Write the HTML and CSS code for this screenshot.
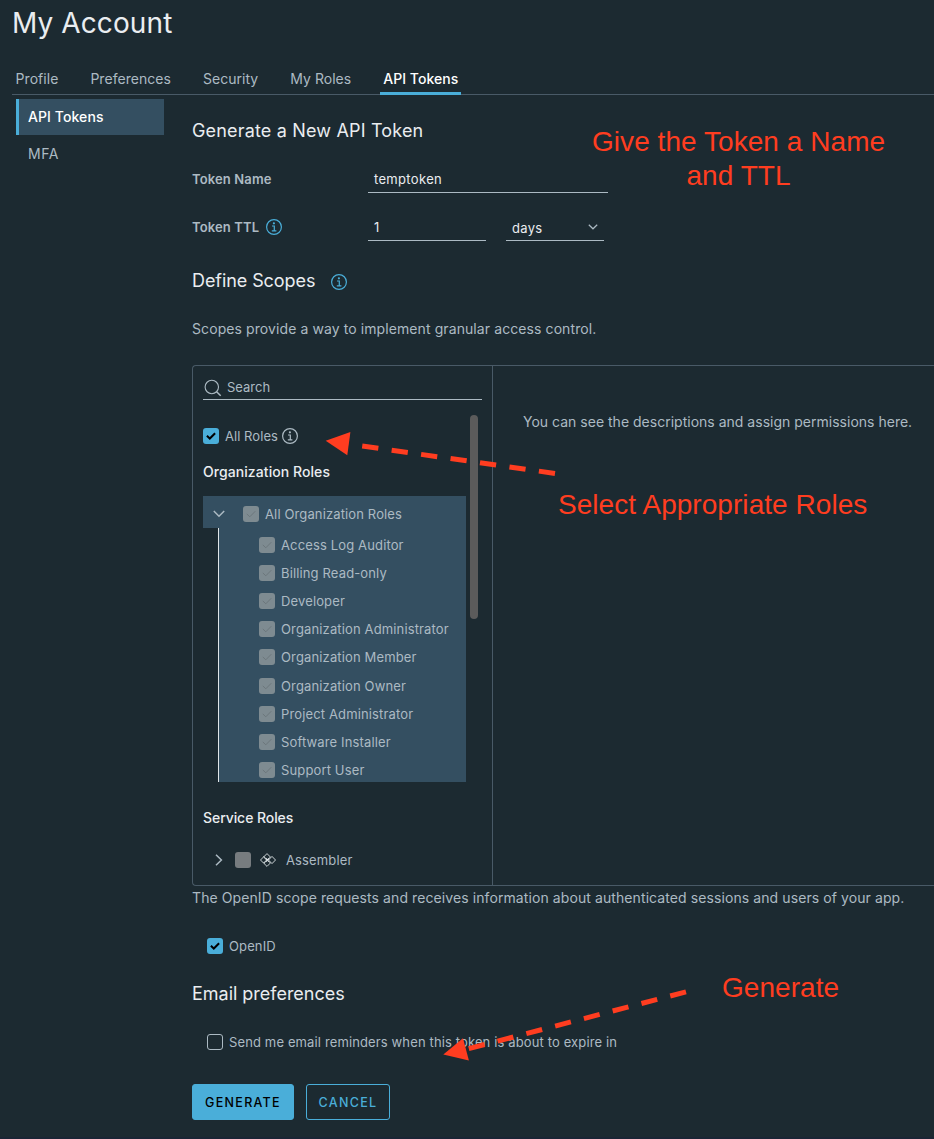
FILE: index.html
```html
<!DOCTYPE html>
<html lang="en">
<head>
<meta charset="utf-8">
<title>My Account</title>
<link rel="stylesheet" href="styles.css">
</head>
<body>
<svg class="defs" width="0" height="0">
  <symbol id="info" viewBox="0 0 16 16"><circle cx="8" cy="8" r="7.4" fill="none" stroke="currentColor" stroke-width="1.2"/><circle cx="7.9" cy="4.3" r="1.1" fill="currentColor"/><path d="M6 7h2.3v4.8M5.8 11.9h4.6" fill="none" stroke="currentColor" stroke-width="1.2"/></symbol>
  <symbol id="check" viewBox="0 0 16 16"><path d="M3.9 7.8l2.9 2.7 5.3-5.2" fill="none" stroke="currentColor" stroke-width="2"/></symbol>
  <symbol id="check-thin" viewBox="0 0 16 16"><path d="M3.8 7.9l3 2.9 5.5-5.6" fill="none" stroke="currentColor" stroke-width="1"/></symbol>
</svg>
<div class="page">
  <h1 class="title">My Account</h1>
  <nav class="tabs">
    <a class="tab">Profile</a><a class="tab">Preferences</a><a class="tab">Security</a><a class="tab">My Roles</a><a class="tab active">API Tokens</a>
  </nav>
  <div class="body">
    <aside class="sidebar">
      <a class="side-item current">API Tokens</a>
      <a class="side-item">MFA</a>
    </aside>
    <main class="content">
      <h2 class="heading first">Generate a New API Token</h2>
      <div class="field">
        <label class="label">Token Name</label>
        <div class="input wide">temptoken</div>
      </div>
      <div class="field second">
        <label class="label">Token TTL <svg class="info blue"><use href="#info"/></svg></label>
        <div class="input ttl">1</div>
        <div class="input unit"><span>days</span><svg class="caret" viewBox="0 0 10 6"><path d="M.8.8L5 4.8 9.2.8" fill="none" stroke="currentColor" stroke-width="1.2"/></svg></div>
      </div>
      <h2 class="heading scopes">Define Scopes <svg class="info blue"><use href="#info"/></svg></h2>
      <p class="text">Scopes provide a way to implement granular access control.</p>
      <section class="box">
        <div class="panel">
          <div class="search"><svg class="lens" viewBox="0 0 18 18"><circle cx="7.8" cy="8" r="6.7" fill="none" stroke="currentColor" stroke-width="1.1"/><path d="M12.6 12.8l4.1 4" stroke="currentColor" stroke-width="1.5"/></svg>Search</div>
          <div class="scroll">
            <div class="list">
              <div class="all-roles"><span class="box-check on"><svg><use href="#check"/></svg></span><span>All Roles</span><svg class="info"><use href="#info"/></svg></div>
              <h3 class="group org">Organization Roles</h3>
              <div class="tree">
                <div class="tree-head"><svg class="chev-down" viewBox="0 0 12 8"><path d="M.8 1l5.2 5.2L11.2 1" fill="none" stroke="currentColor" stroke-width="1.5"/></svg><span class="box-check off"><svg><use href="#check-thin"/></svg></span><span>All Organization Roles</span></div>
                <div class="children">
                  <div class="role"><span class="box-check off"><svg><use href="#check-thin"/></svg></span>Access Log Auditor</div>
                  <div class="role"><span class="box-check off"><svg><use href="#check-thin"/></svg></span>Billing Read-only</div>
                  <div class="role"><span class="box-check off"><svg><use href="#check-thin"/></svg></span>Developer</div>
                  <div class="role"><span class="box-check off"><svg><use href="#check-thin"/></svg></span>Organization Administrator</div>
                  <div class="role"><span class="box-check off"><svg><use href="#check-thin"/></svg></span>Organization Member</div>
                  <div class="role"><span class="box-check off"><svg><use href="#check-thin"/></svg></span>Organization Owner</div>
                  <div class="role"><span class="box-check off"><svg><use href="#check-thin"/></svg></span>Project Administrator</div>
                  <div class="role"><span class="box-check off"><svg><use href="#check-thin"/></svg></span>Software Installer</div>
                  <div class="role"><span class="box-check off"><svg><use href="#check-thin"/></svg></span>Support User</div>
                </div>
              </div>
              <h3 class="group service">Service Roles</h3>
              <div class="service-row">
                <svg class="chev-right" viewBox="0 0 8 12"><path d="M1 .8L6.4 6 1 11.2" fill="none" stroke="currentColor" stroke-width="1.5"/></svg>
                <span class="box-check empty"></span>
                <svg class="assembler" viewBox="0 0 16 14"><path d="M7 .6L10.4 4 7 7.4 3.6 4zM7 6.6L10.4 10 7 13.4 3.6 10zM3.9 3.6L7.3 7l-3.4 3.4L.5 7zM12 3.4L15.5 7 12 10.6 8.5 7z" fill="none" stroke="currentColor" stroke-width=".9"/><path d="M6 5.5l3 3M9 5.5l-3 3" stroke="currentColor" stroke-width="1.1"/></svg>
                <span>Assembler</span>
              </div>
            </div>
            <div class="thumb"></div>
          </div>
        </div>
        <p class="hint">You can see the descriptions and assign permissions here.</p>
      </section>
      <p class="text openid-text">The OpenID scope requests and receives information about authenticated sessions and users of your app.</p>
      <div class="option openid"><span class="box-check on"><svg><use href="#check"/></svg></span>OpenID</div>
      <h2 class="heading email">Email preferences</h2>
      <div class="option remind"><span class="box-check outline"></span>Send me email reminders when this token is about to expire in</div>
      <div class="actions"><button class="btn primary">GENERATE</button><button class="btn">CANCEL</button></div>
    </main>
  </div>
  <div class="footer-edge"></div>
  <svg class="arrows" viewBox="0 0 934 1139">
    <path class="head" d="M325.7 440.7L350.4 432 347.3 455.2z"/>
    <path class="dash" d="M362.2 446L555 473.4"/>
    <path class="head" d="M443.3 1054.6L463 1038.2 468.9 1060.4z"/>
    <path class="dash" d="M468.8 1048.6L686 991.9"/>
  </svg>
  <div class="note name-note">Give the Token a Name<br>and TTL</div>
  <div class="note roles-note">Select Appropriate Roles</div>
  <div class="note generate-note">Generate</div>
</div>
</body>
</html>
```
FILE: styles.css
```css
* { box-sizing: border-box; }
body { margin: 0; background: #1c2a31; color: #acbac3; font: 13px/16px Inter, sans-serif; letter-spacing: .13px; }
h1, h2, h3, p { margin: 0; font-weight: 400; }
svg { display: block; flex: none; }
.defs { position: absolute; }
.page { position: relative; width: 934px; height: 1139px; overflow: hidden; }
.title { height: 44px; padding: 1px 0 0 12px; color: #eaedf0; font-size: 28px; line-height: 44px; letter-spacing: .1px; }
.tabs { display: flex; gap: 26px; height: 32px; margin: 19px 0 0 12px; padding-left: .6px; border-bottom: 1px solid #495a67; font-size: 14px; line-height: 32px; letter-spacing: .04px; }
.tab { padding: 0 3px; }
.tab.active { height: 32px; border-bottom: 3px solid #4aaed9; color: #fff; font-weight: 500; }
.body { display: flex; gap: 28px; }
.sidebar { width: 164px; flex: none; padding: 4px 0 0 16px; }
.side-item { display: block; height: 37px; padding-left: 12px; font-size: 14px; line-height: 38px; letter-spacing: .5px; }
.side-item.current { height: 36px; padding-left: 9px; border-left: 3px solid #4aaed9; background: #344f61; color: #fff; font-weight: 500; line-height: 36px; letter-spacing: .09px; }
.content { flex: 1; min-width: 0; }
.heading { color: #eaedf0; font-size: 18px; line-height: 25px; letter-spacing: 0; }
.first { margin-top: 23px; letter-spacing: .17px; }
.field { display: flex; height: 27px; margin-top: 23px; }
.second { margin-top: 21px; }
.label { display: flex; align-items: center; gap: 7px; width: 176px; height: 25px; font-weight: 600; }
.info { width: 16px; height: 16px; }
.blue { color: #4aaed9; }
.input { height: 27px; padding-left: 6px; border-bottom: 1px solid #acbac3; color: #eaedf0; line-height: 26px; letter-spacing: .33px; }
.wide { width: 240px; }
.ttl { width: 118px; margin-right: 20px; }
.unit { display: flex; justify-content: space-between; width: 98px; padding: 1px 6px 0 6px; }
.caret { width: 10px; height: 6px; margin-top: 9px; color: #acbac3; }
.scopes { display: flex; align-items: center; gap: 16px; margin-top: 27px; letter-spacing: -.08px; }
.scopes .info { margin-top: 3px; }
.text { margin-top: 26px; font-size: 14px; line-height: 20px; letter-spacing: .09px; white-space: nowrap; }
.box { display: flex; height: 521px; margin-top: 26px; border: 1px solid #495a67; border-right: 0; border-radius: 4px 0 0 4px; }
.panel { width: 300px; flex: none; padding: 10px 0 0 10px; border-right: 1px solid #495a67; }
.search { display: flex; align-items: center; width: 279px; height: 24px; gap: 5px; padding: 0 0 1px 1px; border-bottom: 1px solid #acbac3; letter-spacing: 0; }
.lens { width: 18px; height: 18px; margin-top: 2px; }
.scroll { display: flex; gap: 4px; }
.list { width: 263px; }
.thumb { width: 8px; height: 204px; margin-top: 15px; border-radius: 4px; background: #5b5b5b; }
.all-roles { display: flex; align-items: center; height: 16px; margin-top: 28px; letter-spacing: .05px; }
.all-roles .info { margin-left: 4px; }
.box-check { flex: none; width: 16px; height: 16px; margin-right: 6px; border-radius: 3px; }
.box-check svg { width: 16px; height: 16px; }
.on { background: #4aaed9; color: #000; }
.off { background: #7e8b91; color: #6c777c; }
.empty { background: #777c7f; }
.outline { border: 1px solid #acbac3; }
.group { height: 20px; color: #eaedf0; font-size: 14px; font-weight: 500; line-height: 20px; letter-spacing: .07px; }
.org { margin-top: 18px; }
.tree { height: 286px; margin-top: 14px; }
.tree-head { display: flex; align-items: center; height: 32px; padding: 3px 0 0 10px; background: #344f61; }
.chev-down { width: 12px; height: 8px; margin-right: 18px; }
.children { height: 254px; margin-left: 15px; padding: 3px 0 0 40px; overflow: hidden; border-left: 1px solid #dfe5e8; background: #344f61; }
.role { display: flex; align-items: center; height: 28.12px; letter-spacing: .14px; }
.service { margin-top: 26px; letter-spacing: -.07px; }
.service-row { display: flex; align-items: center; height: 32px; margin-top: 16px; padding-left: 12px; }
.chev-right { width: 8px; height: 12px; margin-right: 12px; }
.service-row .box-check { margin-right: 9px; }
.assembler { width: 16px; height: 14px; margin-right: 10px; color: #dfe5e8; }
.hint { margin: 46px 0 0 30px; font-size: 14px; line-height: 20px; letter-spacing: .01px; white-space: nowrap; }
.openid-text { margin-top: 0; line-height: 24px; letter-spacing: .09px; }
.option { display: flex; align-items: center; height: 16px; padding-left: 15px; }
.openid { margin-top: 28px; }
.email { margin-top: 27px; letter-spacing: -.02px; }
.remind { margin-top: 28px; }
.actions { display: flex; gap: 12px; margin-top: 34px; }
.btn { width: 84px; height: 36px; padding: 1px 0 0; border: 1px solid #4aaed9; border-radius: 3px; background: none; color: #4aaed9; font: 500 12.5px/34px Inter, sans-serif; letter-spacing: 1.3px; }
.primary { width: 102px; background: #4aaed9; color: #000; }
.footer-edge { height: 2px; margin-top: 17px; background: #1a2535; }
.arrows { position: absolute; left: 0; top: 0; width: 934px; height: 1139px; }
.head { fill: #ff3d20; }
.dash { fill: none; stroke: #ff3d20; stroke-width: 5; stroke-dasharray: 16.3 13.44; }
.note { position: absolute; color: #ff3d20; font: 28px/34px "Liberation Sans", Arial, sans-serif; letter-spacing: .05px; text-align: center; white-space: nowrap; }
.name-note { left: 592px; top: 125px; }
.roles-note { left: 558px; top: 488px; }
.generate-note { left: 722px; top: 971px; }
```
